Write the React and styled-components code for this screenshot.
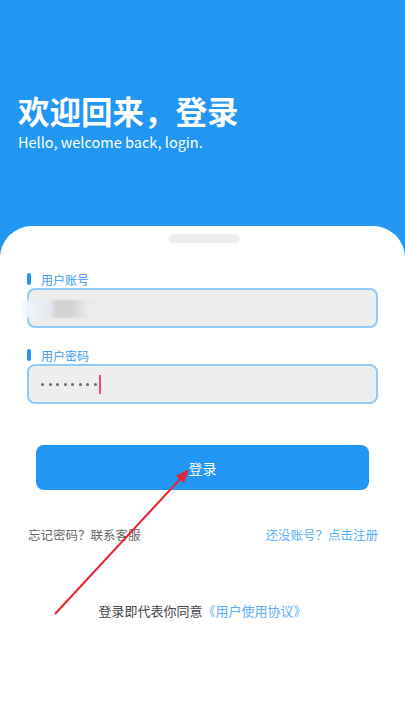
import styled, { createGlobalStyle } from "styled-components";

const GlobalStyle = createGlobalStyle`
  html, body {
    margin: 0;
    padding: 0;
    background: #fff;
  }
  body {
    font-family: "Noto Sans CJK SC", "Noto Sans", sans-serif;
  }
  * { box-sizing: border-box; }
`;

const Page = styled.div`
  position: relative;
  width: 405px;
  min-height: 720px;
  background: #2196f3;
  display: flex;
  flex-direction: column;
`;

const Header = styled.header`
  padding: 91px 18px 0;
  height: 226px;
  color: #fff;
`;

const Title = styled.h1`
  margin: 0;
  font-size: 31.5px;
  font-weight: 700;
  line-height: 38px;
`;

const Subtitle = styled.p`
  margin: 3px 0 0;
  font-size: 14.5px;
  line-height: 20px;
`;

const Card = styled.main`
  flex: 1;
  background: #fff;
  border-radius: 32px 32px 0 0;
  padding: 8px 27px 0;
  display: flex;
  flex-direction: column;
`;

const Handle = styled.div`
  width: 71px;
  height: 9px;
  border-radius: 5px;
  background: #eeeeee;
  align-self: center;
  margin-left: 3px;
`;

const Field = styled.div`
  display: flex;
  flex-direction: column;
  margin-top: ${(p) => p.$top}px;
`;

const Label = styled.div`
  display: flex;
  align-items: center;
  gap: 10px;
  height: 16px;
  font-size: 12px;
  color: #3a9cf0;
  margin-bottom: 1px;

  &::before {
    content: "";
    width: 4px;
    height: 12px;
    border-radius: 2px;
    background: #2196f3;
  }
`;

const Input = styled.div`
  position: relative;
  height: 40px;
  border: 2px solid #90caf9;
  border-radius: 8px;
  background: #eeeeee;
  display: flex;
  align-items: center;
  padding-left: 12px;
  gap: 4.5px;
`;

const Dot = styled.span`
  width: 3px;
  height: 3px;
  border-radius: 50%;
  background: #666;
`;

const Caret = styled.span`
  width: 2px;
  height: 19px;
  margin-left: -2px;
  background: #ff4081;
`;

const Smudge = styled.div`
  position: absolute;
  left: -7px;
  top: 10px;
  width: 80px;
  height: 18px;
  background: linear-gradient(
    90deg,
    rgba(245, 248, 252, 0.9) 0%,
    rgba(228, 234, 242, 0.95) 35%,
    #d2d2d2 42%,
    #d2d2d2 62%,
    rgba(230, 230, 230, 0.6) 80%,
    rgba(238, 238, 238, 0) 100%
  );
  filter: blur(1px);
`;

const Button = styled.button`
  margin: 41px 9px 0;
  height: 45px;
  border: none;
  border-radius: 8px;
  background: #2196f3;
  color: #fff;
  font-family: "Noto Sans CJK SC", sans-serif;
  font-size: 14px;
`;

const Links = styled.div`
  margin-top: 36px;
  display: flex;
  justify-content: space-between;
  font-size: 12.5px;
  line-height: 18px;
  padding-left: 1px;
`;

const TextLink = styled.span`
  color: ${(p) => (p.$blue ? "#5aaef5" : "#666")};
`;

const Agreement = styled.p`
  margin: 58px 0 0;
  text-align: center;
  font-size: 13px;
  line-height: 18px;
  color: #444;
`;

const Arrow = styled.svg`
  position: absolute;
  left: 0;
  top: 0;
  pointer-events: none;
`;

export default function App() {
  return (
    <Page>
      <GlobalStyle />
      <Header>
        <Title>欢迎回来，登录</Title>
        <Subtitle>Hello, welcome back, login.</Subtitle>
      </Header>
      <Card>
        <Handle />
        <Field $top={28}>
          <Label>用户账号</Label>
          <Input>
            <Smudge />
          </Input>
        </Field>
        <Field $top={19}>
          <Label>用户密码</Label>
          <Input>
            {Array.from({ length: 8 }).map((_, i) => (
              <Dot key={i} />
            ))}
            <Caret />
          </Input>
        </Field>
        <Button>登录</Button>
        <Links>
          <TextLink>忘记密码？联系客服</TextLink>
          <TextLink $blue>还没账号？点击注册</TextLink>
        </Links>
        <Agreement>
          登录即代表你同意<TextLink $blue>《用户使用协议》</TextLink>
        </Agreement>
      </Card>
      <Arrow width="405" height="720" viewBox="0 0 405 720">
        <line x1="55" y1="614" x2="182" y2="477" stroke="#e8232f" strokeWidth="2" />
        <polygon points="189,469 176,476 184,483" fill="#e8232f" />
      </Arrow>
    </Page>
  );
}
